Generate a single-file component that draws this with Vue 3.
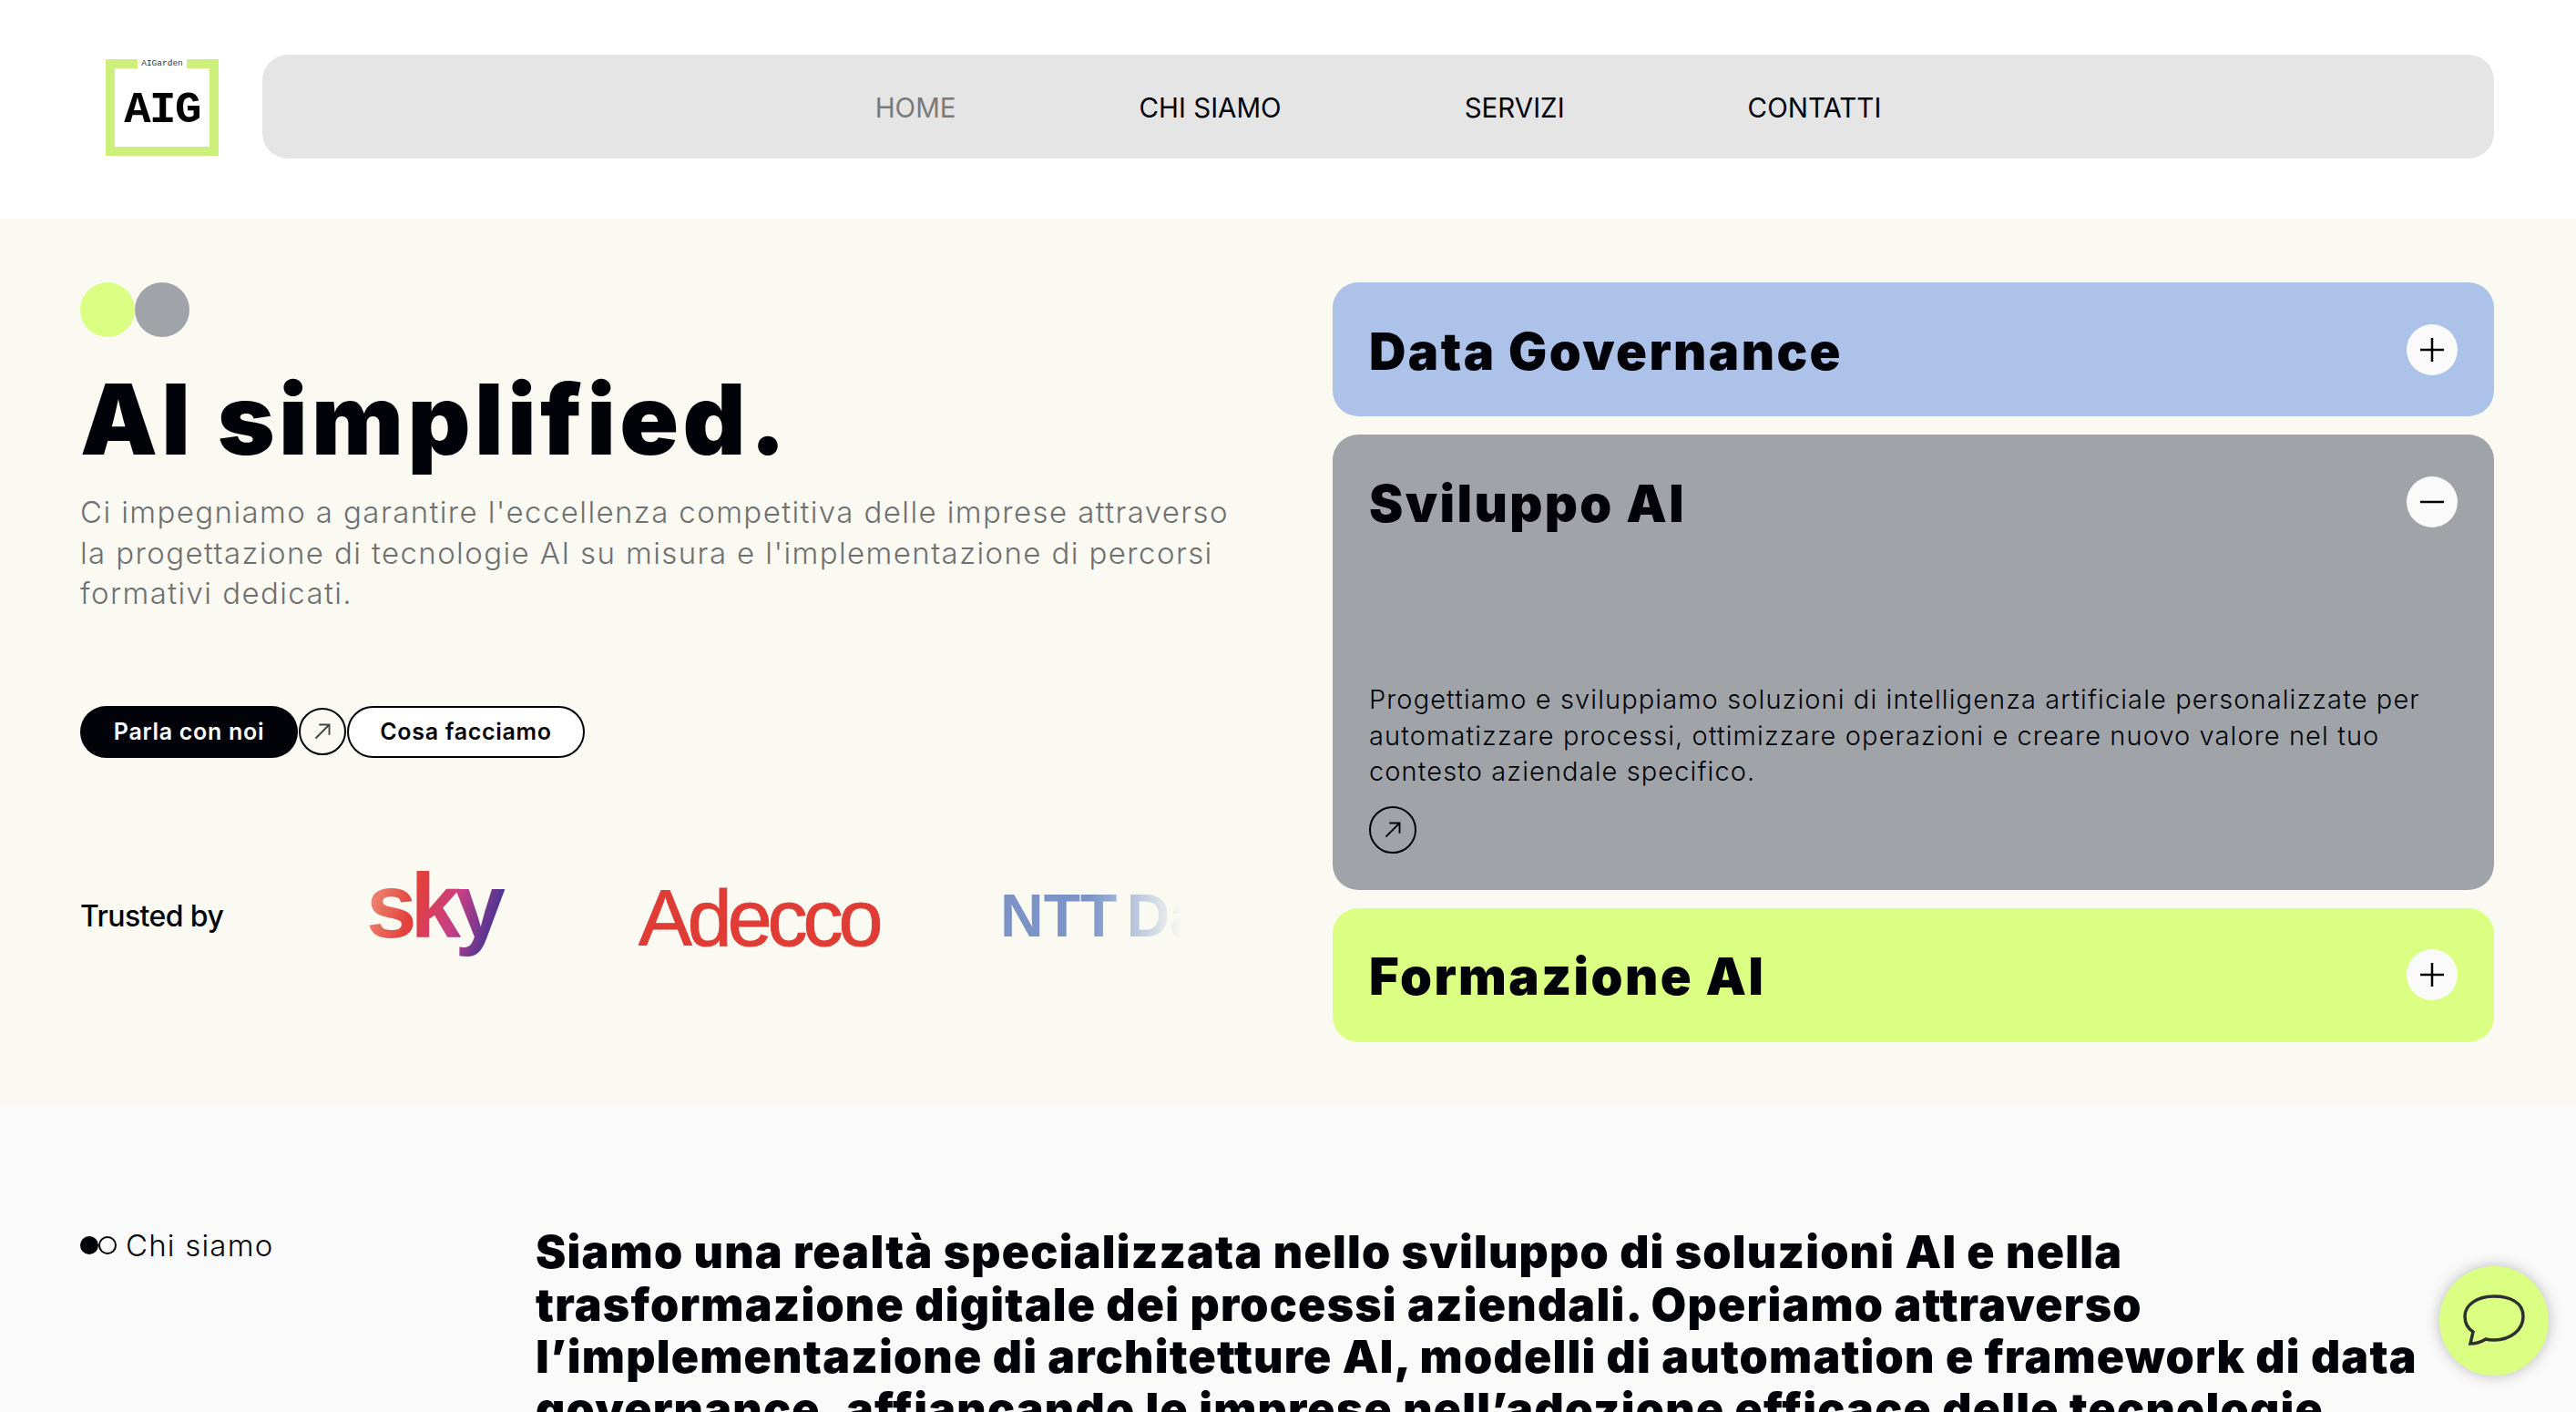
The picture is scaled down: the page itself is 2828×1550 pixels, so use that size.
<script setup>
import { ref } from "vue";

const navLinks = [
  { label: "HOME", active: true },
  { label: "CHI SIAMO" },
  { label: "SERVIZI" },
  { label: "CONTATTI" },
];

const cards = ref([
  { title: "Data Governance", tone: "blue", open: false },
  {
    title: "Sviluppo AI",
    tone: "grey",
    open: true,
    text: "Progettiamo e sviluppiamo soluzioni di intelligenza artificiale personalizzate per automatizzare processi, ottimizzare operazioni e creare nuovo valore nel tuo contesto aziendale specifico.",
  },
  { title: "Formazione AI", tone: "lime", open: false },
]);
</script>

<template>
  <div class="page">
    <header class="topbar">
      <a class="logo">
        <span class="logo-tag">AIGarden</span>
        <span class="logo-mark">AIG</span>
      </a>
      <nav class="nav">
        <a v-for="link in navLinks" :key="link.label" :class="{ active: link.active }">{{ link.label }}</a>
      </nav>
    </header>

    <section class="hero">
      <div class="intro">
        <div class="dots">
          <span class="dot lime"></span>
          <span class="dot grey"></span>
        </div>
        <h1>AI simplified.</h1>
        <p class="lead">
          Ci impegniamo a garantire l'eccellenza competitiva delle imprese attraverso la progettazione di tecnologie AI su misura e l'implementazione di percorsi formativi dedicati.
        </p>
        <div class="actions">
          <button class="btn solid">Parla con noi</button>
          <span class="round-arrow small">
            <svg viewBox="0 0 24 24"><path d="M6 18 18 6M9 6h9v9" /></svg>
          </span>
          <button class="btn outline">Cosa facciamo</button>
        </div>
        <div class="trusted">
          <span class="trusted-label">Trusted by</span>
          <div class="logos">
            <svg class="brand sky" width="170" height="130" viewBox="0 0 170 130">
              <defs>
                <linearGradient id="skyFill" gradientUnits="userSpaceOnUse" x1="0" y1="40" x2="145" y2="85">
                  <stop offset="0" stop-color="#ee8f78" />
                  <stop offset="0.35" stop-color="#e2403c" />
                  <stop offset="0.65" stop-color="#c83f85" />
                  <stop offset="1" stop-color="#3a3396" />
                </linearGradient>
              </defs>
              <text x="0" y="88" fill="url(#skyFill)">sky</text>
            </svg>
            <svg class="brand adecco" width="290" height="110" viewBox="0 0 290 110">
              <text x="0" y="87" fill="#e03c36">Adecco</text>
            </svg>
            <svg class="brand ntt" width="300" height="90" viewBox="0 0 300 90">
              <text x="0" y="67" fill="#7b93c6">NTT Data</text>
            </svg>
          </div>
        </div>
      </div>

      <div class="cards">
        <article v-for="card in cards" :key="card.title" class="card" :class="[card.tone, { open: card.open }]">
          <div class="card-head">
            <h2>{{ card.title }}</h2>
            <span class="toggle">
              <svg viewBox="0 0 28 28">
                <path d="M1 14h26" />
                <path v-if="!card.open" d="M14 1v26" />
              </svg>
            </span>
          </div>
          <div v-if="card.open" class="card-body">
            <p>{{ card.text }}</p>
            <span class="round-arrow">
              <svg viewBox="0 0 24 24"><path d="M6 18 18 6M9 6h9v9" /></svg>
            </span>
          </div>
        </article>
      </div>
    </section>

    <section class="about">
      <div class="about-label">
        <span class="mini-dots"><i></i><i></i></span>
        Chi siamo
      </div>
      <h3>
        Siamo una realtà specializzata nello sviluppo di soluzioni AI e nella<br />
        trasformazione digitale dei processi aziendali. Operiamo attraverso<br />
        l’implementazione di architetture AI, modelli di automation e framework di data<br />
        governance, affiancando le imprese nell’adozione efficace delle tecnologie
      </h3>
    </section>

    <button class="chat" aria-label="Chat">
      <svg viewBox="0 0 68 58">
        <path d="M34 2C16 2 2 11 2 24c0 7 3 13 9 17l-3 13c6 0 12-2 17-5 3 1 6 1 9 1 18 0 32-11 32-26S52 2 34 2Z" />
      </svg>
    </button>
  </div>
</template>

<style>
html,
body {
  margin: 0;
  overflow: hidden;
  background: #fafafa;
}
</style>

<style scoped>
.page {
  height: 1550px;
  overflow: hidden;
  font-family: Inter, "Liberation Sans", sans-serif;
  color: #020308;
}

/* ===== Header ===== */
.topbar {
  height: 240px;
  box-sizing: border-box;
  background: #fff;
  padding: 60px 90px 0 116px;
  display: flex;
  align-items: flex-start;
  gap: 48px;
}
.logo {
  position: relative;
  width: 124px;
  height: 106px;
  margin-top: 5px;
  padding-top: 6px;
  box-sizing: border-box;
  border: 10px solid #cdf07a;
  background: #fff;
  display: flex;
  align-items: center;
  justify-content: center;
  flex-shrink: 0;
}
.logo-tag {
  position: absolute;
  top: -10px;
  left: 25px;
  width: 54px;
  height: 10px;
  background: #fff;
  font: 400 9.5px/10px "Liberation Mono", monospace;
  text-align: center;
  color: #333;
}
.logo-mark {
  font: 700 49px/1 "Liberation Mono", monospace;
  letter-spacing: -1.5px;
  color: #000;
}
.nav {
  flex: 1;
  height: 114px;
  padding-top: 2px;
  box-sizing: border-box;
  border-radius: 28px;
  background: #e5e5e5;
  display: flex;
  align-items: center;
  justify-content: center;
  gap: 201px;
  font-size: 29.5px;
  font-weight: 400;
}
.nav a.active {
  color: #7a7a7a;
}

/* ===== Hero ===== */
.hero {
  height: 973px;
  box-sizing: border-box;
  background: #fafaf3;
  padding: 70px 90px 0 88px;
  display: grid;
  grid-template-columns: minmax(0, 1fr) 1275px;
  gap: 100px;
}
.intro {
  display: flex;
  flex-direction: column;
}
.dots {
  display: flex;
}
.dot {
  width: 60px;
  height: 60px;
  border-radius: 50%;
}
.dot.lime {
  background: #dbff82;
}
.dot.grey {
  background: #a0a4a8;
}
h1 {
  margin: 25px 0 0;
  font-size: 107px;
  line-height: 130px;
  font-weight: 900;
  letter-spacing: 4.4px;
}
.lead {
  margin: 15px 0 0;
  font-size: 33px;
  line-height: 44.5px;
  font-weight: 300;
  letter-spacing: 1.4px;
  color: #707070;
  width: 1285px;
}
.actions {
  margin-top: 101px;
  display: flex;
  align-items: center;
  gap: 1px;
}
.btn {
  height: 57px;
  box-sizing: border-box;
  border-radius: 30px;
  font-family: inherit;
  font-size: 25px;
  font-weight: 600;
  letter-spacing: 0.7px;
}
.btn.solid {
  width: 239px;
  background: #020308;
  color: #fff;
  border: 0;
}
.btn.outline {
  width: 261px;
  background: #fff;
  color: #020308;
  border: 2px solid #020308;
}
.round-arrow {
  width: 52px;
  height: 52px;
  box-sizing: border-box;
  border: 2px solid #020308;
  border-radius: 50%;
  display: flex;
  align-items: center;
  justify-content: center;
}
.round-arrow svg {
  width: 30px;
  height: 30px;
  fill: none;
  stroke: #020308;
  stroke-width: 1.5;
}
.round-arrow.small svg {
  stroke: #444;
}
.trusted {
  margin-top: 109px;
  display: flex;
  align-items: center;
}
.trusted-label {
  width: 222px;
  font-size: 32px;
  font-weight: 500;
  letter-spacing: -0.6px;
}
.logos {
  width: 987px;
  padding-left: 92px;
  box-sizing: border-box;
  display: flex;
  align-items: center;
  overflow: hidden;
  -webkit-mask-image: linear-gradient(to right, #000 calc(100% - 100px), transparent);
  mask-image: linear-gradient(to right, #000 calc(100% - 100px), transparent);
}
.brand {
  flex-shrink: 0;
}
.brand text {
  font-family: "Liberation Sans", sans-serif;
}
.sky {
  margin-right: 129px;
}
.sky text {
  font-size: 100px;
  font-weight: 700;
  letter-spacing: -7px;
}
.adecco {
  margin-right: 107px;
}
.adecco text {
  font-size: 88px;
  letter-spacing: -5px;
  stroke: #e03c36;
  stroke-width: 1;
}
.ntt text {
  font-size: 66px;
  font-weight: 700;
  word-spacing: -8px;
}

/* ===== Accordion ===== */
.cards {
  display: flex;
  flex-direction: column;
  gap: 20px;
}
.card {
  min-height: 147px;
  box-sizing: border-box;
  border-radius: 28px;
  padding: 0 40px;
  display: flex;
  flex-direction: column;
}
.card.blue {
  background: #adc2e8;
}
.card.grey {
  background: #a0a4a8;
}
.card.lime {
  background: #dbff82;
}
.card-head {
  height: 147px;
  flex-shrink: 0;
  display: flex;
  align-items: center;
  justify-content: space-between;
}
h2 {
  margin: 0;
  padding-top: 4px;
  font-size: 56px;
  font-weight: 900;
  letter-spacing: 2.4px;
}
.toggle {
  width: 56px;
  height: 56px;
  border-radius: 50%;
  background: #fafafa;
  display: flex;
  align-items: center;
  justify-content: center;
}
.toggle svg {
  width: 28px;
  height: 28px;
  fill: none;
  stroke: #000;
  stroke-width: 2.5;
}
.card-body {
  padding-top: 124px;
  padding-bottom: 40px;
}
.card-body p {
  margin: 0 0 18px;
  font-size: 29px;
  line-height: 39.5px;
  font-weight: 300;
  letter-spacing: 1.1px;
}

/* ===== Chi siamo ===== */
.about {
  background: #fafafa;
  padding: 133px 90px 0 88px;
  display: grid;
  grid-template-columns: 500px 1fr;
}
.about-label {
  display: flex;
  align-items: center;
  gap: 10px;
  font-size: 33px;
  font-weight: 300;
  letter-spacing: 1.2px;
  height: 42px;
}
.mini-dots {
  display: flex;
}
.mini-dots i {
  width: 20px;
  height: 20px;
  box-sizing: border-box;
  border-radius: 50%;
  border: 2px solid #020308;
}
.mini-dots i:first-child {
  background: #020308;
}
h3 {
  margin: 0;
  font-size: 50px;
  line-height: 57.6px;
  font-weight: 900;
  letter-spacing: 1.2px;
  white-space: nowrap;
}

/* ===== Chat ===== */
.chat {
  position: fixed;
  left: 2678px;
  top: 1390px;
  width: 120px;
  height: 120px;
  border: 0;
  border-radius: 50%;
  background: #dbff82;
  box-shadow: 0 0 16px rgba(0, 0, 0, 0.25);
  display: flex;
  align-items: center;
  justify-content: center;
}
.chat svg {
  width: 68px;
  height: 58px;
  fill: none;
  stroke: #2d2f33;
  stroke-width: 3.5;
}
</style>
